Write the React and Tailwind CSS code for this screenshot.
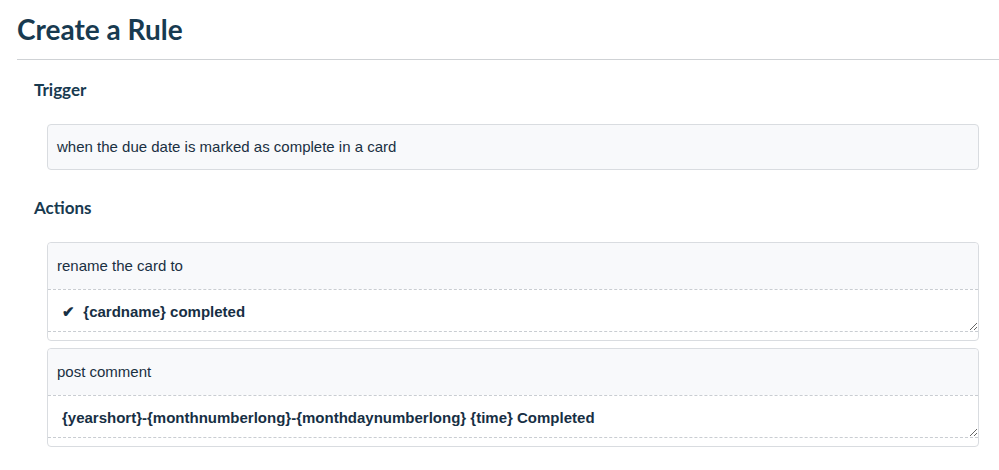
import React from "react";

const heading = "font-['Lato',sans-serif] font-bold text-[#183a50]";
const body = "font-['Liberation_Sans',Arial,sans-serif] text-[15px] text-[#1a3042]";

const ActionBox = ({ label, value }) => (
  <div className="rounded-[4px] border border-[#d9dce0] bg-white pb-[8px]">
    <div className={`h-[46px] flex items-center px-[9px] bg-[#f8f9fb] rounded-t-[4px] ${body}`}>
      {label}
    </div>
    <textarea
      defaultValue={value}
      className={`block w-full h-[43px] border-y border-dashed border-[#c9cdd2] bg-white px-[14px] pt-[11px] outline-none resize-y font-bold ${body} text-[#172f44]`}
    />
  </div>
);

const App = () => {
  return (
    <div className="min-h-[470px] bg-white pt-[12px]">
      <h1 className={`${heading} text-[28px] leading-[34px] ml-[17px]`}>Create a Rule</h1>
      <div className="ml-[17px] mt-[13px] border-t border-[#cfd2d5]" />

      <div className="pl-[34px] pr-[20px]">
        <h2 className={`${heading} text-[17px] mt-[18px] leading-[24px]`}>Trigger</h2>
        <div className="ml-[13px] mt-[22px]">
          <div className={`h-[46px] flex items-center px-[9px] rounded-[4px] border border-[#d9dce0] bg-[#f8f9fb] ${body}`}>
            when the due date is marked as complete in a card
          </div>
        </div>

        <h2 className={`${heading} text-[17px] mt-[26px] leading-[24px]`}>Actions</h2>
        <div className="ml-[13px] mt-[22px] flex flex-col gap-[7px]">
          <ActionBox label="rename the card to" value={"✔  {cardname} completed"} />
          <ActionBox
            label="post comment"
            value="{yearshort}-{monthnumberlong}-{monthdaynumberlong} {time} Completed"
          />
        </div>
      </div>
    </div>
  );
};

export default App;
